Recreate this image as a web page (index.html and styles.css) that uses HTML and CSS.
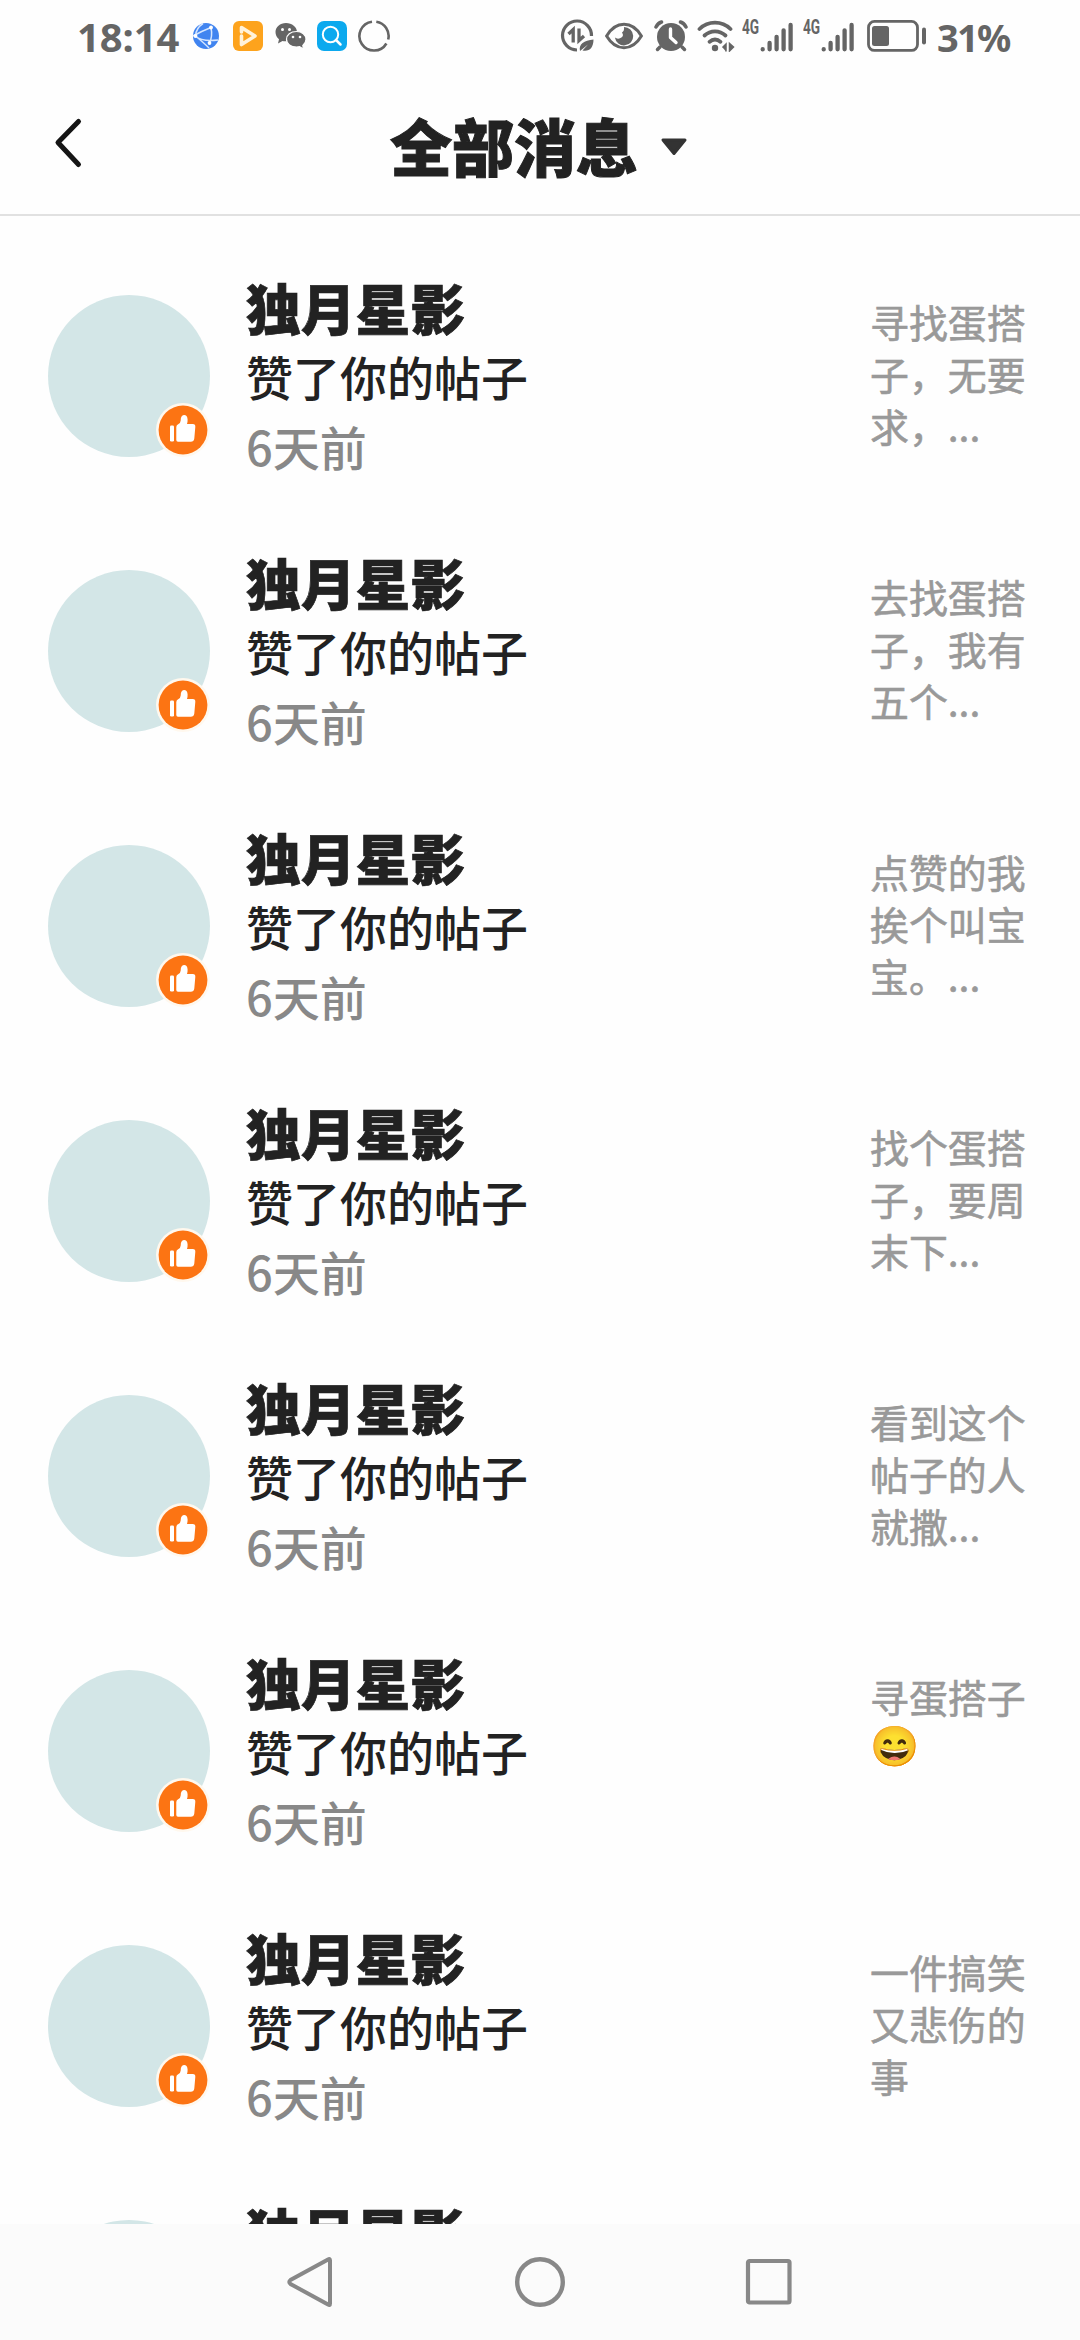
FILE: index.html
```html
<!DOCTYPE html>
<html lang="zh-CN">
<head>
<meta charset="utf-8">
<title>全部消息</title>
<link rel="stylesheet" href="styles.css">
</head>
<body>
<svg class="defs" width="0" height="0" aria-hidden="true">
  <symbol id="like" viewBox="0 0 54 54">
    <circle cx="27" cy="27" r="27" fill="#fff8ee"/>
    <circle cx="27" cy="27" r="24.4" fill="#fc7413"/>
    <rect x="14" y="22.5" width="4" height="16" rx="1.2" fill="#fff"/>
    <path d="M20.3 37V24Q20.300 22 22.500 21Q24.500 20 24.700 17.500C24.500 10.500 31.500 10.500 31.600 16.500Q31.700 19 31 21H36.800Q39.600 21 39.300 24L38.300 35.500Q37.800 38.700 34.800 38.700H22Q20.300 38.700 20.300 37Z" fill="#fff"/>
  </symbol>
  <symbol id="signal" viewBox="0 0 34 34">
    <g stroke="#656565" stroke-width="4.300" stroke-linecap="round"><path d="M2.700 30.200v.2M9.600 24v6.300M16.600 17.800v12.500M23.600 11.300v19M30.600 6v24.300"/></g>
  </symbol>
</svg>
<div class="screen">
  <div class="status">
    <span class="clock">18:14</span>
    <svg class="ic globe" width="28" height="28" viewBox="0 0 28 28"><circle cx="14" cy="14" r="13" fill="#4084f0"/><path d="M1 14Q10 9 19 5.500M11 1.500Q4 6 3.500 14Q12 21 17 26M19 5.500Q21 15 17 22M3.500 14Q10 20 26 18" fill="none" stroke="#d5e6ff" stroke-width="1.500"/><circle cx="19" cy="5.500" r="1.900" fill="#fff"/><circle cx="3.500" cy="14" r="1.900" fill="#fff"/><circle cx="17.500" cy="21" r="1.900" fill="#fff"/></svg>
    <svg class="ic play" width="30" height="30" viewBox="0 0 30 30"><rect width="30" height="30" rx="6" fill="#fda31d"/><path d="M8.500 11V6.500L22 15L8.500 23.500V15" fill="none" stroke="#fff2da" stroke-width="3.600" stroke-linejoin="round" stroke-linecap="round"/></svg>
    <svg class="ic wechat" width="32" height="28" viewBox="0 0 32 28"><path d="M11 1C5 1 .5 5 .5 10Q.5 14.500 4 17.200L3 21.500L7.500 19Q10 19.600 12.500 19C18 18.500 22 15 22 10C22 5 17 1 11 1Z" fill="#656565"/><path d="M21.500 9.500C15.500 9.500 11.500 13 11.500 17.300C11.500 22 16 25 21.500 25L24.500 24.700L28.500 27L27.800 23.400Q31 21 31 17.300C31 13 27 9.500 21.500 9.500Z" fill="#656565" stroke="#fff" stroke-width="1.200"/><g fill="#fff"><circle cx="7.500" cy="7.500" r="1.500"/><circle cx="14.500" cy="7.500" r="1.500"/><circle cx="18" cy="15" r="1.300"/><circle cx="25" cy="15" r="1.300"/></g></svg>
    <svg class="ic find" width="30" height="30" viewBox="0 0 30 30"><rect width="30" height="30" rx="7" fill="#0ca9ee"/><circle cx="13.500" cy="13.500" r="7.700" fill="none" stroke="#fff" stroke-width="2"/><path d="M19 19L23.500 23.500" stroke="#fff" stroke-width="2.500" stroke-linecap="round"/></svg>
    <svg class="ic ring" width="32" height="32" viewBox="0 0 32 32"><g fill="none" stroke="#656565" stroke-width="2.600"><path d="M18.300 1.700A14.500 14.500 0 0 1 30.200 19.500"/><path d="M28.400 23.500A14.500 14.500 0 1 1 14 1.700"/></g></svg>

    <svg class="ic data" width="34" height="34" viewBox="0 0 34 34"><path d="M17 31A14.500 14.500 0 1 1 31.500 17" fill="none" stroke="#656565" stroke-width="3.200"/><path d="M8.500 15L13.200 10.500V23.500M19 9.500V21.500L24 17" fill="none" stroke="#656565" stroke-width="3.300"/><path d="M20 32C18.500 25 24 21.500 33.500 20.500C33.500 29 29 33 22.500 31.500L28 25.500L20 32Z" fill="#656565"/></svg>
    <svg class="ic eye" width="38" height="28" viewBox="0 0 38 28"><path d="M1.600 14Q8.500 2.300 19 2.300T36.400 14Q29.500 25.700 19 25.700T1.600 14Z" fill="none" stroke="#656565" stroke-width="3"/><path d="M19 5A9.200 9.200 0 1 1 9.900 15.500Q12.500 17.500 15.500 16Q19.500 14 17 10.500Q19.500 9 19 5Z" fill="#656565"/></svg>
    <svg class="ic alarm" width="34" height="32" viewBox="0 0 34 32"><circle cx="17" cy="17" r="14" fill="#656565"/><path d="M2 7Q4 3 7.500 2M32 7Q30 3 26.500 2" fill="none" stroke="#656565" stroke-width="3.500" stroke-linecap="round"/><path d="M6 27L3.500 29.500M28 27L30.500 29.500" stroke="#656565" stroke-width="3.500" stroke-linecap="round"/><path d="M16.500 9V17.500L22 22.500" fill="none" stroke="#fff" stroke-width="3.400" stroke-linecap="round" stroke-linejoin="round"/></svg>
    <svg class="ic wifi" width="38" height="32" viewBox="0 0 38 32"><g fill="none" stroke="#656565" stroke-width="3.800" stroke-linecap="round"><path d="M2.500 9Q9 2.700 18 2.700T33.500 9"/><path d="M7.500 15.500Q12 11.300 18 11.300T28.500 15.500"/><path d="M12.500 21.800Q15 19.500 18 19.500T23.500 21.800"/></g><circle cx="18" cy="28" r="3.200" fill="#656565"/><path d="M25.500 27.500L29 24V31.500M32.500 23.500V31L36.500 27Z" fill="#656565" stroke="#656565" stroke-width="1.500"/></svg>
    <span class="net"><span class="narrow">4G</span></span><svg class="ic bars" width="34" height="34"><use href="#signal"/></svg>
    <span class="net second"><span class="narrow">4G</span></span><svg class="ic bars" width="34" height="34"><use href="#signal"/></svg>
    <svg class="ic battery" width="60" height="32" viewBox="0 0 60 32"><rect x="1.500" y="1.400" width="49" height="29" rx="6" fill="none" stroke="#656565" stroke-width="2.800"/><rect x="5" y="6" width="17" height="20" rx="2.500" fill="#656565"/><rect x="55" y="7.500" width="4" height="17" rx="2" fill="#656565"/></svg>
    <span class="percent">31%</span>
  </div>

  <header class="header">
    <svg class="back" width="30" height="52" viewBox="0 0 30 52"><path d="M25.500 4.500L5 25.500L25.500 47.500" fill="none" stroke="#151515" stroke-width="5" stroke-linecap="round" stroke-linejoin="round"/></svg>
    <h1 class="title">全部消息</h1>
    <svg class="caret" width="28" height="18" viewBox="0 0 28 18"><path d="M3 2H25L14 15.500Z" fill="#333" stroke="#333" stroke-width="3" stroke-linejoin="round"/></svg>
  </header>

  <main class="list">
    <article class="row"><div class="avatar"><svg class="badge"><use href="#like"/></svg></div><div class="info"><div class="name">独月星影</div><div class="action">赞了你的帖子</div><div class="time">6天前</div></div><div class="post">寻找蛋搭<br>子，无要<br>求，...</div></article>
    <article class="row"><div class="avatar"><svg class="badge"><use href="#like"/></svg></div><div class="info"><div class="name">独月星影</div><div class="action">赞了你的帖子</div><div class="time">6天前</div></div><div class="post">去找蛋搭<br>子，我有<br>五个...</div></article>
    <article class="row"><div class="avatar"><svg class="badge"><use href="#like"/></svg></div><div class="info"><div class="name">独月星影</div><div class="action">赞了你的帖子</div><div class="time">6天前</div></div><div class="post">点赞的我<br>挨个叫宝<br>宝。...</div></article>
    <article class="row"><div class="avatar"><svg class="badge"><use href="#like"/></svg></div><div class="info"><div class="name">独月星影</div><div class="action">赞了你的帖子</div><div class="time">6天前</div></div><div class="post">找个蛋搭<br>子，要周<br>末下...</div></article>
    <article class="row"><div class="avatar"><svg class="badge"><use href="#like"/></svg></div><div class="info"><div class="name">独月星影</div><div class="action">赞了你的帖子</div><div class="time">6天前</div></div><div class="post">看到这个<br>帖子的人<br>就撒...</div></article>
    <article class="row"><div class="avatar"><svg class="badge"><use href="#like"/></svg></div><div class="info"><div class="name">独月星影</div><div class="action">赞了你的帖子</div><div class="time">6天前</div></div><div class="post">寻蛋搭子<br><span class="emoji">😄</span></div></article>
    <article class="row"><div class="avatar"><svg class="badge"><use href="#like"/></svg></div><div class="info"><div class="name">独月星影</div><div class="action">赞了你的帖子</div><div class="time">6天前</div></div><div class="post">一件搞笑<br>又悲伤的<br>事</div></article>
    <article class="row"><div class="avatar"></div><div class="info"><div class="name">独月星影</div></div></article>
  </main>

  <nav class="nav">
    <svg width="54" height="54" viewBox="-2.500 0 54 54"><path d="M43.500 5.500V48.500Q43.500 51 41.500 49.500L4 29Q1.500 27 4 25L41.500 4.500Q43.500 3 43.500 5.500Z" fill="none" stroke="#888" stroke-width="4"/></svg>
    <svg width="54" height="54" viewBox="0 0 54 54"><circle cx="27" cy="27" r="22.800" fill="none" stroke="#888" stroke-width="4.400"/></svg>
    <svg width="54" height="54" viewBox="0 0 54 54"><rect x="6" y="6" width="41.500" height="41.500" rx="1.500" fill="none" stroke="#888" stroke-width="4.200"/></svg>
  </nav>
</div>
</body>
</html>
```

FILE: styles.css
```css
* { box-sizing: border-box; }
body {
  margin: 0;
  background: #fefefe;
  color: #222;
  font-family: "Noto Sans CJK SC", sans-serif;
}
.defs { display: block; }
.screen {
  width: 1080px;
  height: 2340px;
  display: flex;
  flex-direction: column;
  overflow: hidden;
}

/* Status bar */
.status {
  flex: none;
  height: 72px;
  padding-left: 77px;
  display: flex;
  align-items: center;
  color: #656565;
  white-space: nowrap;
}
.ic { flex: none; display: block; }
.clock {
  width: 115px;
  font: 700 40px/72px "Noto Sans", sans-serif;
  letter-spacing: -0.1px;
  padding-top: 2px;
}
.play { margin-left: 13px; }
.wechat { margin-left: 12px; }
.find { margin-left: 10px; }
.ring { margin-left: 11px; }
.data { margin-left: 170px; }
.eye { margin-left: 11px; }
.alarm { margin-left: 11px; }
.wifi { margin-left: 9px; }
.net {
  width: 20px;
  margin-left: 7px;
  margin-bottom: 17px;
  font: 700 19.5px/24px "Roboto", sans-serif;
}
.narrow {
  display: inline-block;
  transform: scaleX(0.7);
  transform-origin: left center;
}
.net.second { margin-left: 9px; }
.bars { margin-left: -2px; }
.battery { margin-left: 12px; }
.percent {
  margin-left: 10px;
  padding-top: 2px;
  font: 700 38px/72px "Noto Sans", sans-serif;
  letter-spacing: -1.7px;
}

/* Title bar */
.header {
  flex: none;
  height: 144px;
  padding-left: 53px;
  display: flex;
  align-items: center;
  border-bottom: 2px solid #e1e1e1;
}
.back { margin-right: 307px; }
.title {
  margin: 0;
  padding-top: 4px;
  font-size: 62px;
  font-weight: 900;
  line-height: 90px;
  -webkit-text-stroke: 1px #222;
}
.caret { margin-left: 22px; margin-top: 7px; }

/* Message list */
.list {
  flex: 1;
  min-height: 0;
  padding-top: 55px;
  overflow: hidden;
}
.row {
  height: 275px;
  display: flex;
  align-items: flex-start;
  padding-left: 48px;
}
.avatar {
  flex: none;
  position: relative;
  width: 162px;
  height: 162px;
  margin-top: 24px;
  border-radius: 50%;
  background: #d3e6e7;
}
.badge {
  position: absolute;
  left: 108px;
  top: 108px;
  width: 54px;
  height: 54px;
}
.info {
  width: 624px;
  margin-left: 36px;
  line-height: 70px;
}
.name {
  font-size: 54.8px;
  font-weight: 900;
  -webkit-text-stroke: 0.7px #222;
}
.action { font-size: 47px; font-weight: 500; }
.time {
  font-size: 47px;
  line-height: 69px;
  font-weight: 500;
  color: #888;
}
.post {
  margin-top: 24px;
  font-size: 38.9px;
  line-height: 52px;
  font-weight: 400;
  color: #999;
  white-space: nowrap;
  -webkit-text-stroke: 0.6px #999;
}
.emoji {
  font-family: "Noto Color Emoji", "Noto Sans CJK SC", sans-serif;
  font-size: 39.5px;
  line-height: 40px;
  vertical-align: 5px;
}

/* System navigation */
.nav {
  flex: none;
  height: 116px;
  display: flex;
  align-items: center;
  justify-content: center;
  gap: 175px;
  background: #fbfbfb;
}
```
